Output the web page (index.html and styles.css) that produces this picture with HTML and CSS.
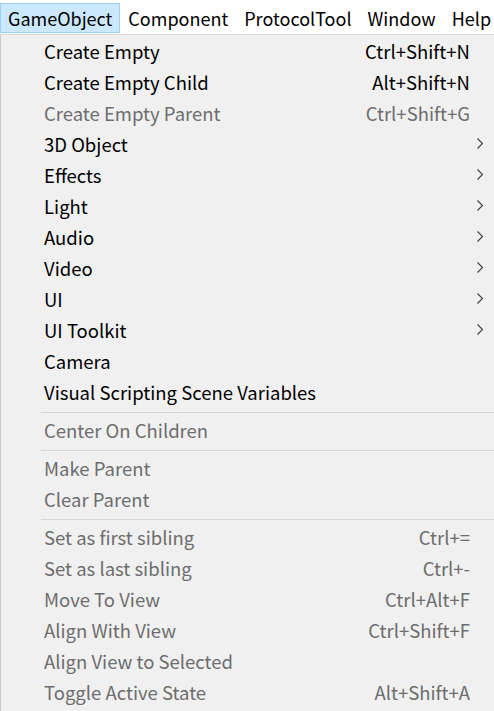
FILE: index.html
```html
<!DOCTYPE html>
<html>
<head>
<meta charset="utf-8">
<link rel="stylesheet" href="styles.css">
</head>
<body>
<div class="menubar">
  <div class="mb-item active">GameObject</div>
  <div class="mb-item">Component</div>
  <div class="mb-item">ProtocolTool</div>
  <div class="mb-item">Window</div>
  <div class="mb-item">Help</div>
</div>
<div class="menu">
  <div class="row"><span class="label">Create Empty</span><span class="key">Ctrl+Shift+N</span><span class="arrow"></span></div>
  <div class="row"><span class="label">Create Empty Child</span><span class="key">Alt+Shift+N</span><span class="arrow"></span></div>
  <div class="row dis"><span class="label">Create Empty Parent</span><span class="key">Ctrl+Shift+G</span><span class="arrow"></span></div>
  <div class="row"><span class="label">3D Object</span><span class="key"></span><span class="arrow"><svg width="6" height="11" viewBox="0 0 6 11"><path d="M0.5 0.5 L5.5 5.5 L0.5 10.5" fill="none" stroke="#3c3c3c" stroke-width="1.1"/></svg></span></div>
  <div class="row"><span class="label">Effects</span><span class="key"></span><span class="arrow"><svg width="6" height="11" viewBox="0 0 6 11"><path d="M0.5 0.5 L5.5 5.5 L0.5 10.5" fill="none" stroke="#3c3c3c" stroke-width="1.1"/></svg></span></div>
  <div class="row"><span class="label">Light</span><span class="key"></span><span class="arrow"><svg width="6" height="11" viewBox="0 0 6 11"><path d="M0.5 0.5 L5.5 5.5 L0.5 10.5" fill="none" stroke="#3c3c3c" stroke-width="1.1"/></svg></span></div>
  <div class="row"><span class="label">Audio</span><span class="key"></span><span class="arrow"><svg width="6" height="11" viewBox="0 0 6 11"><path d="M0.5 0.5 L5.5 5.5 L0.5 10.5" fill="none" stroke="#3c3c3c" stroke-width="1.1"/></svg></span></div>
  <div class="row"><span class="label">Video</span><span class="key"></span><span class="arrow"><svg width="6" height="11" viewBox="0 0 6 11"><path d="M0.5 0.5 L5.5 5.5 L0.5 10.5" fill="none" stroke="#3c3c3c" stroke-width="1.1"/></svg></span></div>
  <div class="row"><span class="label">UI</span><span class="key"></span><span class="arrow"><svg width="6" height="11" viewBox="0 0 6 11"><path d="M0.5 0.5 L5.5 5.5 L0.5 10.5" fill="none" stroke="#3c3c3c" stroke-width="1.1"/></svg></span></div>
  <div class="row"><span class="label">UI Toolkit</span><span class="key"></span><span class="arrow"><svg width="6" height="11" viewBox="0 0 6 11"><path d="M0.5 0.5 L5.5 5.5 L0.5 10.5" fill="none" stroke="#3c3c3c" stroke-width="1.1"/></svg></span></div>
  <div class="row"><span class="label">Camera</span><span class="key"></span><span class="arrow"></span></div>
  <div class="row"><span class="label">Visual Scripting Scene Variables</span><span class="key"></span><span class="arrow"></span></div>
  <div class="sep"></div>
  <div class="row dis"><span class="label">Center On Children</span><span class="key"></span><span class="arrow"></span></div>
  <div class="sep"></div>
  <div class="row dis"><span class="label">Make Parent</span><span class="key"></span><span class="arrow"></span></div>
  <div class="row dis"><span class="label">Clear Parent</span><span class="key"></span><span class="arrow"></span></div>
  <div class="sep"></div>
  <div class="row dis"><span class="label">Set as first sibling</span><span class="key">Ctrl+=</span><span class="arrow"></span></div>
  <div class="row dis"><span class="label">Set as last sibling</span><span class="key">Ctrl+-</span><span class="arrow"></span></div>
  <div class="row dis"><span class="label">Move To View</span><span class="key">Ctrl+Alt+F</span><span class="arrow"></span></div>
  <div class="row dis"><span class="label">Align With View</span><span class="key">Ctrl+Shift+F</span><span class="arrow"></span></div>
  <div class="row dis"><span class="label">Align View to Selected</span><span class="key"></span><span class="arrow"></span></div>
  <div class="row dis"><span class="label">Toggle Active State</span><span class="key">Alt+Shift+A</span><span class="arrow"></span></div>
</div>
</body>
</html>
```
FILE: styles.css
```css
html, body {
  margin: 0;
  padding: 0;
  background: #ffffff;
  overflow: hidden;
}
body {
  font-family: "Noto Sans CJK SC", "Noto Sans", sans-serif;
  font-size: 18.5px;
  color: #000;
}
.menubar {
  display: flex;
  height: 34px;
  align-items: stretch;
  padding-top: 3px;
  padding-bottom: 1px;
  box-sizing: border-box;
  white-space: nowrap;
  font-size: 18px;
}
.mb-item {
  padding: 0 7px 0 7px;
  display: flex;
  align-items: center;
  border: 1px solid transparent;
  line-height: 1;
}
.mb-item.active {
  background: #cce8ff;
  border-color: #99d1ff;
}
.menu {
  background: #f0f0f0;
  border-left: 1px solid #cccccc;
  border-top: 1px solid #d9d9d9;
  padding-bottom: 6px;
  width: 100%;
  box-sizing: border-box;
}
.row {
  display: grid;
  grid-template-columns: 1fr auto 24px;
  height: 31px;
  align-items: center;
  padding-left: 43px;
  white-space: nowrap;
}
.row.dis {
  color: #6d6d6d;
}
.key {
  text-align: right;
}
.arrow {
  display: flex;
  justify-content: flex-start;
  padding-left: 7px;
  align-items: center;
}
.arrow svg {
  display: block;
}
.sep {
  height: 7px;
  padding-left: 40px;
  padding-top: 5px;
  box-sizing: border-box;
}
.sep::after {
  content: "";
  display: block;
  height: 1px;
  width: 100%;
  background: #d7d7d7;
}
```
